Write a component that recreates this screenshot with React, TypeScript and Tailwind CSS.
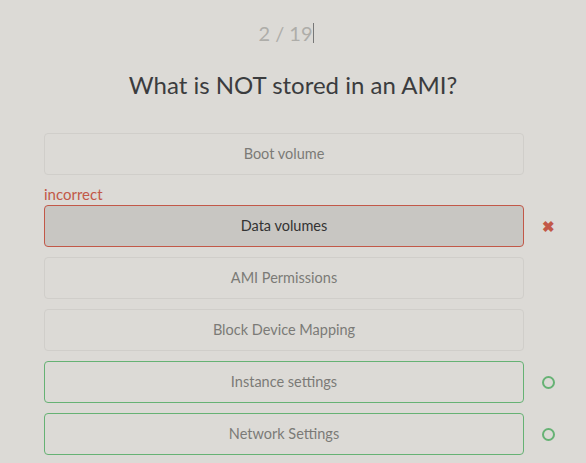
const options = [
  { label: "Boot volume", state: "none" },
  { label: "Data volumes", state: "wrong" },
  { label: "AMI Permissions", state: "none" },
  { label: "Block Device Mapping", state: "none" },
  { label: "Instance settings", state: "right" },
  { label: "Network Settings", state: "right" },
]

function Option({ label, state }: { label: string; state: string }) {
  const box =
    state == "wrong"
      ? "bg-[#c8c6c2] border-[#c25848] text-[#333333]"
      : state == "right"
      ? "border-[#66b274] text-[#7b7a77]"
      : "border-[#d0ceca] text-[#7b7a77]"
  return (
    <div className="flex items-center">
      <div className={"w-[480px] h-[42px] rounded-[4px] border flex items-center justify-center text-[14.5px] " + box}>
        {label}
      </div>
      <div className="w-[48px] flex justify-center">
        {state == "wrong" && <span className="text-[#c25848] text-[15px] font-bold leading-none">✖</span>}
        {state == "right" && <div className="w-[13px] h-[13px] rounded-full border-2 border-[#66b274]"></div>}
      </div>
    </div>
  )
}

export default function App() {
  return (
    <div className="w-[586px] h-[463px] bg-[#dcdad6] overflow-hidden font-['Lato',sans-serif]">
      <div className="pt-[19px] pr-[14px] flex justify-center text-[20px] text-[#aeada9] leading-[28px]">
        <span>2 / 19</span>
        <span className="w-px h-[20px] bg-[#777] mt-[4px]"></span>
      </div>
      <div className="mt-[23px] text-center text-[24px] text-[#3b3c3e] leading-[30px]">What is NOT stored in an AMI?</div>
      <div className="pl-[44px] mt-[33px] flex flex-col">
        <Option {...options[0]} />
        <div className="text-[15px] text-[#c25848] h-[30px] pt-[9px] leading-[20px]">incorrect</div>
        <div className="flex flex-col gap-[10px]">
          {options.slice(1).map((o) => (
            <Option key={o.label} {...o} />
          ))}
        </div>
      </div>
    </div>
  )
}
